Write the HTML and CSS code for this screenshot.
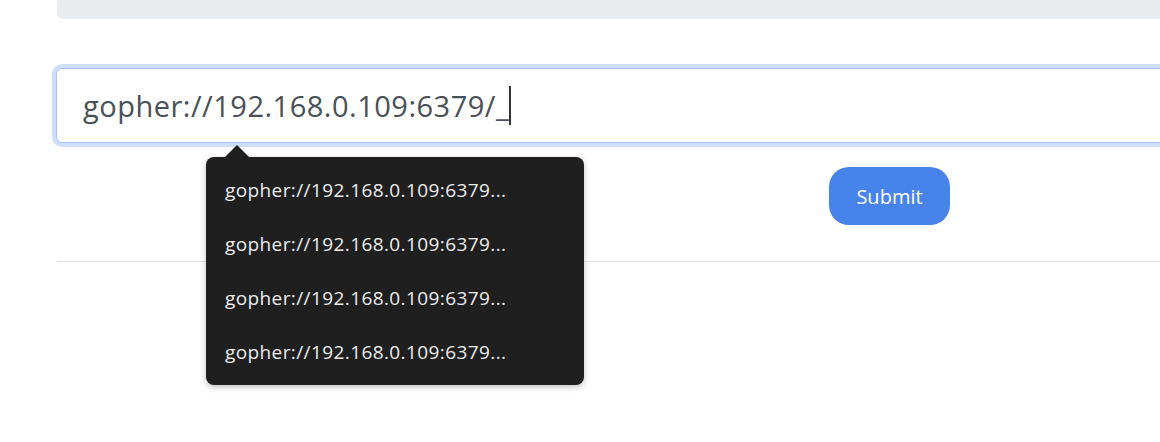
FILE: index.html
```html
<!DOCTYPE html>
<html lang="en">
<head>
<meta charset="utf-8">
<title>Gopher</title>
<link rel="stylesheet" href="styles.css">
</head>
<body>
<div class="page">
  <div class="topbar"></div>
  <form class="form">
    <div class="field">
      <div class="input"><span class="value">gopher://192.168.0.109:6379/_</span><span class="caret"></span></div>
      <ul class="suggest">
        <li>gopher://192.168.0.109:6379...</li>
        <li>gopher://192.168.0.109:6379...</li>
        <li>gopher://192.168.0.109:6379...</li>
        <li>gopher://192.168.0.109:6379...</li>
      </ul>
    </div>
    <div class="actions">
      <button type="button" class="submit">Submit</button>
    </div>
  </form>
  <hr class="rule">
</div>
</body>
</html>
```

FILE: styles.css
```css
html, body {
  margin: 0;
  padding: 0;
  background: #ffffff;
}
body {
  font-family: "Open Sans", "Noto Sans", sans-serif;
}
.page {
  box-sizing: border-box;
  padding-left: 56px;
  width: 100%;
  height: 442px;
  overflow: hidden;
}
.topbar,
.form,
.rule {
  margin-right: -20px;
}
.topbar {
  height: 19px;
  margin-left: 1px;
  background: #e9ecef;
  border-bottom-left-radius: 6px;
}
.form {
  margin-top: 49px;
}
.field {
  position: relative;
}
.input {
  box-sizing: border-box;
  height: 75px;
  border: 1px solid #a9c5f6;
  border-radius: 6px;
  box-shadow: 0 0 0 4px #cfdffb;
  background: #fff;
  padding-left: 26px;
  display: flex;
  align-items: center;
  font-size: 29px;
  letter-spacing: 0.5px;
  color: #495057;
}
.caret {
  display: inline-block;
  width: 2px;
  height: 39px;
  background: #333;
  margin-left: 0;
}
.suggest {
  position: absolute;
  left: 150px;
  top: 89px;
  width: 378px;
  margin: 0;
  padding: 6px 0;
  list-style: none;
  background: #1f1f1f;
  border-radius: 8px;
  box-shadow: 0 2px 6px rgba(0,0,0,0.25);
  z-index: 2;
}
.suggest::before {
  content: "";
  position: absolute;
  left: 18px;
  top: -12px;
  border-left: 13px solid transparent;
  border-right: 13px solid transparent;
  border-bottom: 13px solid #1f1f1f;
}
.suggest li {
  height: 54px;
  line-height: 54px;
  padding-left: 19px;
  font-size: 19px;
  letter-spacing: 0.4px;
  color: #ececec;
  white-space: nowrap;
}
.actions {
  margin-top: 24px;
  padding-left: 773px;
}
.submit {
  width: 121px;
  height: 58px;
  border: none;
  border-radius: 20px;
  background: #4684eb;
  color: #fff;
  font-family: "Open Sans", "Noto Sans", sans-serif;
  font-size: 20px;
  padding: 0;
}
.rule {
  margin: 36px 0 0 1px;
  border: 0;
  border-top: 1px solid #e3e3e3;
  height: 0;
}
```
